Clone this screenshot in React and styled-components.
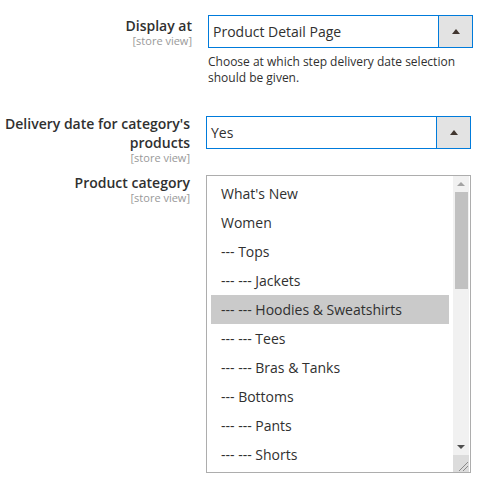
import React from "react";
import styled, { createGlobalStyle } from "styled-components";

const GlobalStyle = createGlobalStyle`
  body {
    margin: 0;
    background: #ffffff;
    font-family: "Open Sans", "Liberation Sans", sans-serif;
    color: #303030;
  }
`;

const Page = styled.div`
  display: flex;
  flex-direction: column;
  padding-top: 15px;
`;

const Field = styled.div`
  display: flex;
  align-items: flex-start;
  gap: 16px;
  padding-left: ${(p) => p.$shift || 0}px;
  margin-bottom: ${(p) => p.$after || 0}px;
`;

const LabelCol = styled.div`
  width: 190px;
  flex: none;
  text-align: right;
  margin-top: ${(p) => (p.$top !== undefined ? p.$top : -2)}px;
`;

const Label = styled.div`
  font-size: 14px;
  font-weight: 600;
  line-height: 19px;
  color: #303030;
`;

const Scope = styled.div`
  margin-top: -1px;
  font-size: 11px;
  line-height: 13px;
  color: #999999;
`;

const Control = styled.div`
  width: 265px;
  flex: none;
  display: flex;
  flex-direction: column;
`;

const SelectBox = styled.div`
  display: flex;
  height: 33px;
  box-sizing: border-box;
  border: 1px solid #007bdb;
  background: #ffffff;
`;

const SelectValue = styled.div`
  flex: 1;
  padding-left: 4px;
  font-size: 14px;
  line-height: 31px;
  color: #303030;
`;

const SelectButton = styled.div`
  width: 34px;
  box-sizing: border-box;
  border-left: 1px solid #007bdb;
  background: #e3e3e3;
  display: flex;
  align-items: center;
  justify-content: center;

  &::after {
    content: "";
    border-left: 4px solid transparent;
    border-right: 4px solid transparent;
    border-bottom: 5px solid #41362f;
  }
`;

const Note = styled.div`
  margin-top: 6px;
  font-size: 12px;
  line-height: 16px;
  color: #303030;
`;

const MultiSelect = styled.div`
  display: flex;
  height: 298px;
  box-sizing: border-box;
  border: 1px solid #adadad;
  background: #ffffff;
`;

const Options = styled.div`
  flex: 1;
  padding: 3px 4px 0 4px;
  overflow: hidden;
`;

const Option = styled.div`
  height: 29px;
  line-height: 29px;
  padding-left: 10px;
  font-size: 14px;
  color: #303030;
  white-space: nowrap;
  background: ${(p) => (p.$selected ? "#cacaca" : "transparent")};
`;

const Scrollbar = styled.div`
  width: 16px;
  margin-right: 1px;
  display: flex;
  flex-direction: column;
  background: #f1f1f1;
`;

const ScrollArrow = styled.div`
  height: 16px;
  display: flex;
  align-items: center;
  justify-content: center;

  &::after {
    content: "";
    border-left: 4px solid transparent;
    border-right: 4px solid transparent;
    ${(p) =>
      p.$down
        ? `border-top: 4px solid ${p.$color};`
        : `border-bottom: 4px solid ${p.$color};`}
  }
`;

const Thumb = styled.div`
  height: 97px;
  margin: 0 1px 0 2px;
  background: #c1c1c1;
`;

const Track = styled.div`
  flex: 1;
`;

const Corner = styled.div`
  height: 17px;
  background: #dcdcdc;
  display: flex;
  align-items: flex-end;
  justify-content: flex-end;
`;

const options = [
  "What's New",
  "Women",
  "--- Tops",
  "--- --- Jackets",
  "--- --- Hoodies & Sweatshirts",
  "--- --- Tees",
  "--- --- Bras & Tanks",
  "--- Bottoms",
  "--- --- Pants",
  "--- --- Shorts",
];

function Select({ value }) {
  return (
    <SelectBox>
      <SelectValue>{value}</SelectValue>
      <SelectButton />
    </SelectBox>
  );
}

export default function App() {
  return (
    <>
      <GlobalStyle />
      <Page>
        <Field $shift={2} $after={30}>
          <LabelCol $top={1}>
            <Label>Display at</Label>
            <Scope>[store view]</Scope>
          </LabelCol>
          <Control>
            <Select value="Product Detail Page" />
            <Note>
              Choose at which step delivery date selection should be given.
            </Note>
          </Control>
        </Field>

        <Field $after={11}>
          <LabelCol>
            <Label>Delivery date for category's products</Label>
            <Scope>[store view]</Scope>
          </LabelCol>
          <Control>
            <Select value="Yes" />
          </Control>
        </Field>

        <Field>
          <LabelCol>
            <Label>Product category</Label>
            <Scope>[store view]</Scope>
          </LabelCol>
          <Control>
            <MultiSelect>
              <Options>
                {options.map((o, i) => (
                  <Option key={i} $selected={i === 4}>
                    {o}
                  </Option>
                ))}
              </Options>
              <Scrollbar>
                <ScrollArrow $color="#a3a3a3" />
                <Thumb />
                <Track />
                <ScrollArrow $down $color="#505050" />
                <Corner>
                  <svg width="16" height="17" viewBox="0 0 16 17">
                    <line x1="6" y1="16" x2="15" y2="7" stroke="#8a8a8a" strokeWidth="1" />
                    <line x1="10" y1="16" x2="15" y2="11" stroke="#8a8a8a" strokeWidth="1" />
                  </svg>
                </Corner>
              </Scrollbar>
            </MultiSelect>
          </Control>
        </Field>
      </Page>
    </>
  );
}
